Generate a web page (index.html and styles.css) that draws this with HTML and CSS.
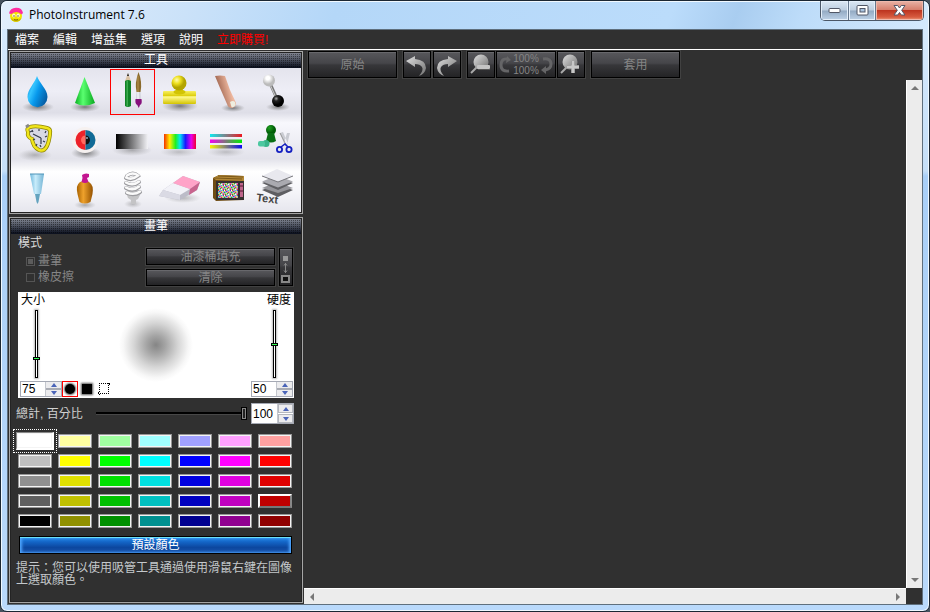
FILE: index.html
```html
<!DOCTYPE html>
<html lang="zh-Hant">
<head>
<meta charset="utf-8">
<title>PhotoInstrument 7.6</title>
<link rel="stylesheet" href="styles.css">
</head>
<body>
<div class="window">
  <header class="titlebar">
    <svg class="logo" viewBox="0 0 16 16" width="16" height="16" aria-hidden="true">
      <circle cx="8" cy="9" r="6" fill="#f2e600"/>
      <path d="M2.500 11a6 6 0 0 0 11 0q-5 4-11 0z" fill="#c9b800"/>
      <path d="M1 6.500Q2 1 8 .8T15 6l-1.500 1.500Q11 4.500 8 5T3.500 7z" fill="#ff2ca0"/>
      <ellipse cx="5.800" cy="8.500" rx="1.700" ry="2" fill="#fffbd0"/><ellipse cx="10.200" cy="8.500" rx="1.700" ry="2" fill="#fffbd0"/>
      <circle cx="6" cy="9" r=".8" fill="#665"/><circle cx="10" cy="9" r=".8" fill="#665"/>
      <path d="M6 12.500q2 1 4 0" stroke="#8a7400" fill="none"/>
    </svg>
    <h1>PhotoInstrument 7.6</h1>
    <div class="caption-buttons">
      <button type="button" class="cap" aria-label="最小化"><svg width="13" height="7" viewBox="0 0 13 7"><rect x="1" y="1.500" width="11" height="4" rx="1" fill="#fff" stroke="#515766"/></svg></button>
      <button type="button" class="cap" aria-label="最大化"><svg width="13" height="11" viewBox="0 0 13 11"><rect x="1" y=".5" width="11" height="9.500" rx="1" fill="#fff" stroke="#515766"/><rect x="4" y="3.500" width="5" height="3.500" fill="#a9c3df" stroke="#515766"/></svg></button>
      <button type="button" class="cap cap-close" aria-label="關閉"><svg width="13" height="11" viewBox="0 0 13 11"><path d="M1 .5h3.700L6.500 3 8.300.5H12L8.700 5.300 12 10H8.300L6.500 7.500 4.700 10H1l3.300-4.700z" fill="#fff" stroke="#535666"/></svg></button>
    </div>
  </header>

  <div class="client">
    <nav class="menubar">
      <button type="button">檔案</button>
      <button type="button">編輯</button>
      <button type="button">增益集</button>
      <button type="button">選項</button>
      <button type="button">說明</button>
      <button type="button" class="buy">立即購買!</button>
    </nav>

    <div class="workspace">
      <aside class="sidebar">
        <section class="panel">
          <h2 class="panel-title">工具</h2>
          <div class="tools">
            <button type="button" aria-label="模糊"><svg viewBox="0 0 45 46">
              <defs>
                <radialGradient id="shade"><stop offset="0" stop-color="#555" stop-opacity=".75"/><stop offset="1" stop-color="#777" stop-opacity="0"/></radialGradient>
                <linearGradient id="drop" x1="0" x2="1" y2=".6"><stop offset="0" stop-color="#0870c8"/><stop offset=".35" stop-color="#35c5ff"/><stop offset=".6" stop-color="#0798ec"/><stop offset="1" stop-color="#0560a8"/></linearGradient>
              </defs>
              <ellipse cx="23" cy="38" rx="16" ry="5" fill="url(#shade)"/>
              <path d="M22 7C20 14 12.500 20 12.500 28a9.800 10 0 0 0 20 0C32.500 20 24 14 22 7z" fill="url(#drop)"/></svg></button>
            <button type="button" aria-label="銳化"><svg viewBox="0 0 45 46">
              <defs><linearGradient id="cone"><stop offset="0" stop-color="#08b020"/><stop offset=".4" stop-color="#5aff70"/><stop offset="1" stop-color="#08a81e"/></linearGradient></defs>
              <ellipse cx="23" cy="38" rx="15" ry="5" fill="url(#shade)"/>
              <path d="M22.500 8L13 34q9 5 20 0z" fill="url(#cone)"/></svg></button>
            <button type="button" class="selected" aria-label="畫筆"><svg viewBox="0 0 45 46">
              <path d="M15 12l3-8 3 8z" fill="#d9c2a4"/><path d="M17 7l1-3 1 3z" fill="#222"/>
              <path d="M15 12q3-2 6 0v25q-3 2-6 0z" fill="#118226"/><path d="M16.500 11.500h1.500v26h-1.500z" fill="#3cab4e"/>
              <path d="M28.500 3q4 10 2 20h-4q-2-9 2-20z" fill="#8a6a2c"/><path d="M28 7v16" stroke="#b89550"/>
              <path d="M26.500 23h4l.5 7h-5z" fill="#d2d4dc"/><path d="M28 23v7" stroke="#fff"/>
              <path d="M25.500 30h6q1 5-1.500 6l-1.200 3-1.500-3q-2.500-1-1.800-6z" fill="#86117c"/></svg></button>
            <button type="button" aria-label="仿製圖章"><svg viewBox="0 0 45 46">
              <defs><radialGradient id="ball" cx=".35" cy=".3"><stop offset="0" stop-color="#fffcb0"/><stop offset=".5" stop-color="#eee020"/><stop offset="1" stop-color="#b3a400"/></radialGradient>
              <linearGradient id="base" x2="0" y2="1"><stop offset="0" stop-color="#f8f060"/><stop offset=".35" stop-color="#dfd010"/><stop offset=".45" stop-color="#fffa90"/><stop offset="1" stop-color="#d3c300"/></linearGradient></defs>
              <ellipse cx="23" cy="37" rx="18" ry="6" fill="url(#shade)"/>
              <path d="M19 19h7l-1 8h-5z" fill="#c8b900"/><rect x="6" y="22" width="33" height="13" rx="1" fill="url(#base)"/>
              <ellipse cx="22.500" cy="23" rx="6" ry="2.500" fill="#d2c404"/><circle cx="22" cy="14" r="7.500" fill="url(#ball)"/></svg></button>
            <button type="button" aria-label="塗抹"><svg viewBox="0 0 45 46">
              <defs><linearGradient id="skin" x2="1" y2="-.4"><stop offset="0" stop-color="#a66c56"/><stop offset=".5" stop-color="#efb9a0"/><stop offset="1" stop-color="#b07861"/></linearGradient></defs>
              <ellipse cx="29" cy="39" rx="12" ry="4" fill="url(#shade)"/>
              <path d="M11 7q5-1 10 0l5 14 6 13q0 4-4 5-4 0-5-4L16 19z" fill="url(#skin)"/><path d="M26 33q3-2 5 0l.500 3q-2 3-4 2z" fill="#eeeee0"/></svg></button>
            <button type="button" aria-label="液化"><svg viewBox="0 0 45 46">
              <defs><radialGradient id="wb" cx=".4" cy=".3"><stop offset=".3" stop-color="#fff"/><stop offset="1" stop-color="#bbb"/></radialGradient><radialGradient id="bb" cx=".35" cy=".3"><stop offset="0" stop-color="#aaa"/><stop offset=".4" stop-color="#222"/><stop offset="1"/></radialGradient></defs>
              <ellipse cx="26" cy="38" rx="12" ry="4" fill="url(#shade)"/>
              <path d="M17 12l9 20" stroke="#777" stroke-width="3"/><path d="M16.500 12l9 20" stroke="#ccc"/>
              <circle cx="17" cy="11.500" r="6" fill="url(#wb)"/><circle cx="26" cy="32" r="6" fill="url(#bb)"/></svg></button>

            <button type="button" aria-label="時間"><svg viewBox="0 0 45 46">
              <ellipse cx="20" cy="38" rx="17" ry="6" fill="url(#shade)" opacity=".5"/>
              <path d="M13 15q-2-4 2-5 6-2 17 1 4 1 3 6-1 8-3 12-3 6-8 4-6-3-7-11-5-2-4-7z" fill="#d8d9e4" stroke="#8f8500" stroke-width="4"/>
              <path d="M13 15q-2-4 2-5 6-2 17 1 4 1 3 6-1 8-3 12-3 6-8 4-6-3-7-11-5-2-4-7z" fill="none" stroke="#f0e51c" stroke-width="2.500"/>
              <path d="M26 21l-8-4m8 4v6M17 13l1 2m6-3v2m7 0l-1 2m2 3l-2 1m0 5l-2-1m-2 6l-1-2m-4 1l1-2m-4-4l2-1m-5-7l2-1" stroke="#333a4a" stroke-width="1.200"/>
              <path d="M11 10l3-2" stroke="#888" stroke-width="3"/></svg></button>
            <button type="button" aria-label="紅眼"><svg viewBox="0 0 45 46">
              <ellipse cx="24" cy="36" rx="15" ry="6" fill="url(#shade)"/>
              <circle cx="23" cy="23" r="13" fill="#f6f1f0"/><path d="M23.500 13a10 10 0 0 0 0 20z" fill="#ed2229"/><path d="M23.500 13a10 10 0 0 1 0 20z" fill="#126b96"/>
              <path d="M23.500 18.500a4.500 4.500 0 0 1 0 9z" fill="#111"/><path d="M23.500 18.500a4.500 4.500 0 0 0 0 9z" fill="#ff6a60"/><circle cx="25" cy="21" r="1" fill="#9ab"/></svg></button>
            <button type="button" aria-label="灰階漸層"><svg viewBox="0 0 45 46">
              <defs><linearGradient id="grey"><stop offset="0"/><stop offset="1" stop-color="#f2f2f6"/></linearGradient></defs>
              <ellipse cx="22" cy="33" rx="20" ry="6" fill="url(#shade)" opacity=".6"/><rect x="6" y="17" width="32" height="15" fill="url(#grey)"/></svg></button>
            <button type="button" aria-label="彩虹漸層"><svg viewBox="0 0 45 46">
              <defs><linearGradient id="rain"><stop offset="0" stop-color="#f33200"/><stop offset=".18" stop-color="#ffee00"/><stop offset=".36" stop-color="#20f020"/><stop offset=".5" stop-color="#00e5f5"/><stop offset=".67" stop-color="#1818ff"/><stop offset=".85" stop-color="#e800f0"/><stop offset="1" stop-color="#f00030"/></linearGradient></defs>
              <ellipse cx="22" cy="35" rx="19" ry="5" fill="url(#shade)" opacity=".4"/><rect x="7" y="17" width="32" height="15" fill="url(#rain)"/></svg></button>
            <button type="button" aria-label="色彩平衡"><svg viewBox="0 0 45 46">
              <defs><linearGradient id="l1"><stop offset="0" stop-color="#10e8ee"/><stop offset="1" stop-color="#ec1820"/></linearGradient><linearGradient id="l2"><stop offset="0" stop-color="#f400f0"/><stop offset="1" stop-color="#00f000"/></linearGradient><linearGradient id="l3"><stop offset="0" stop-color="#f6f600"/><stop offset="1" stop-color="#0808f0"/></linearGradient></defs>
              <ellipse cx="22" cy="35" rx="19" ry="5" fill="url(#shade)" opacity=".4"/>
              <rect x="6" y="17" width="32" height="3" fill="url(#l1)"/><rect x="6" y="22.500" width="32" height="3.500" fill="url(#l2)"/><rect x="6" y="28" width="32" height="3.500" fill="url(#l3)"/></svg></button>
            <button type="button" aria-label="複製物件"><svg viewBox="0 0 45 46">
              <defs><radialGradient id="pawn" cx=".35" cy=".3"><stop offset="0" stop-color="#20a020"/><stop offset="1" stop-color="#005c08"/></radialGradient></defs>
              <circle cx="19" cy="13" r="5" fill="url(#pawn)"/><path d="M16 16h6l2 8q-5 3-10 0z" fill="#086e14"/>
              <circle cx="14" cy="26.500" r="3.500" fill="#38b48a"/><rect x="6" y="24" width="7" height="5.500" rx="2" fill="#4cc8a0"/>
              <path d="M28 16l3-1 5 12-3 2zM38 16l-3 0-3 10 3 2z" fill="#c9cbd2"/><path d="M28 16l6 12" stroke="#999"/>
              <circle cx="27.500" cy="32.500" r="2.600" fill="none" stroke="#1420c0" stroke-width="1.800"/><circle cx="37" cy="32.500" r="2.600" fill="none" stroke="#1420c0" stroke-width="1.800"/><path d="M29 30l4-3 3 3" fill="none" stroke="#1420c0" stroke-width="1.500"/></svg></button>

            <button type="button" aria-label="修復膏"><svg viewBox="0 0 45 46">
              <defs><linearGradient id="tube"><stop offset="0" stop-color="#70b8dc"/><stop offset=".4" stop-color="#c8ecfb"/><stop offset="1" stop-color="#74b4d4"/></linearGradient></defs>
              <path d="M15 9h14l-3 20h-7z" fill="url(#tube)"/><path d="M20 29h5l-1.500 8-1 2-1-2z" fill="#64a3bf"/><path d="M15 9h14" stroke="#4f94b8"/></svg></button>
            <button type="button" aria-label="乳液"><svg viewBox="0 0 45 46">
              <defs><linearGradient id="bottle"><stop offset="0" stop-color="#a86200"/><stop offset=".4" stop-color="#efa22c"/><stop offset="1" stop-color="#955200"/></linearGradient></defs>
              <ellipse cx="23" cy="40" rx="11" ry="4" fill="url(#shade)" opacity=".6"/>
              <path d="M18 17q5-2 9 0 5 3 3.500 12l-2 8q-6 3-11 0l-2-8Q13.500 20 18 17z" fill="url(#bottle)"/>
              <path d="M20 10q3-2.500 7-1v3l-2 1 1.500 4q-3.500 2-7 0l1-4z" fill="#c41690"/></svg></button>
            <button type="button" aria-label="燈光"><svg viewBox="0 0 45 46">
              <ellipse cx="23" cy="39" rx="9" ry="4" fill="url(#shade)" opacity=".5"/>
              <path d="M18 24h9l4 4-3 6-2 1v4h-5v-4l-3-2-2-6z" fill="#c4c4c6"/>
              <g fill="none" stroke-linecap="round"><path d="M17 11q6-5 11 0-6 5-12 2m0 5q7 4 13-1m-13 6q7 4 13-1m-12 6q7 3 13-1" stroke="#9b9b9f" stroke-width="4"/><path d="M17 10.500q6-4 11 0-6 5-12 2m0 5q7 4 13-1m-13 6q7 4 13-1m-12 6q7 3 13-1" stroke="#fafafa" stroke-width="2.500"/></g></svg></button>
            <button type="button" aria-label="橡皮擦"><svg viewBox="0 0 45 46">
              <ellipse cx="26" cy="33" rx="18" ry="5" fill="url(#shade)" opacity=".5"/>
              <path d="M2 31l4-6 20-14 17 6-3 8-17 10z" fill="#bcbcc8"/><path d="M6 25l10-7 17 6-10 6z" fill="#f2f2f8"/><path d="M2 31l4-6 17 5v5z" fill="#dadae4"/>
              <path d="M16 18l10-7 17 6-10 7z" fill="#ffa3c8"/><path d="M33 24l10-7-3 8-8 5z" fill="#c8648e"/></svg></button>
            <button type="button" aria-label="雜訊"><svg viewBox="0 0 45 46">
              <defs><pattern id="noise" width="7" height="5" patternUnits="userSpaceOnUse"><rect width="7" height="5" fill="#b4b4ac"/><path d="M0 0h1v1H0zM3 2h1v1H3zM5 4h1v1H5z" fill="#f03030"/><path d="M1 1h1v1H1zM5 0h1v1H5z" fill="#3050e0"/><path d="M2 3h1v1H2zM6 2h1v1H6zM0 4h1v1H0z" fill="#18b030"/><path d="M3 0h1v1H3zM0 2h1v1H0z" fill="#40d0d0"/><path d="M5 3h1v1H5zM2 1h1v1H2z" fill="#e040d0"/><path d="M4 1h1v1H4zM1 3h1v1H1z" fill="#f4f050"/><path d="M6 0h1v1H6zM3 4h1v1H3z" fill="#fff"/></pattern></defs>
              <path d="M9 13l6-3 25 1v24l-28 1-3-3z" fill="#6f4c14"/><path d="M9 13l6-3 25 1v5l-28-1z" fill="#b28736"/><path d="M10 13l28 1M14 11l25 1" stroke="#7b5818"/>
              <rect x="12" y="16" width="28" height="19" fill="#363030"/><rect x="14" y="18" width="20" height="15" fill="url(#noise)"/><rect x="36" y="18" width="3" height="14" fill="#be668c"/><path d="M36 21h3m-3 5h3" stroke="#513"/></svg></button>
            <button type="button" aria-label="圖層與文字"><svg viewBox="0 0 45 46">
              <path d="M10 25l15-6 16 6-15 7z" fill="#5e5e62"/><path d="M10 23l15-6 16 6-15 5z" fill="#95959a"/><path d="M10 18l15-6 16 6-15 7z" fill="#606064"/><path d="M10 16.500l15-6 16 6-15 6z" fill="#aaaab0"/>
              <path d="M10 11l15-7 16 7-15 6z" fill="#e8e8ee"/><path d="M10 11l16 6 15-6" fill="none" stroke="#77777c"/>
              <text class="layer-text" x="4" y="36" transform="rotate(7 4 36)">Text</text></svg></button>
          </div>
        </section>

        <section class="panel brush">
          <h2 class="panel-title">畫筆</h2>
          <div class="brush-body">
            <div class="mode">
              <fieldset class="mode-options">
                <legend>模式</legend>
                <label><input type="radio" name="mode" checked disabled>畫筆</label>
                <label><input type="radio" name="mode" disabled>橡皮擦</label>
              </fieldset>
              <div class="mode-actions">
                <button type="button" class="btn">油漆桶填充</button>
                <button type="button" class="btn">清除</button>
              </div>
              <button type="button" class="btn swap" aria-label="切換大小"><svg width="11" height="34" viewBox="0 0 11 34"><rect x="3" y="6" width="5" height="5" fill="#999"/><path d="M5.500 13v10M4 15.500l1.500-2 1.500 2M4 20.500l1.500 2 1.500-2" fill="none" stroke="#888"/><rect x="2" y="26" width="7" height="6" fill="#111" stroke="#888" stroke-width="2"/></svg></button>
            </div>

            <div class="preview">
              <div class="preview-main">
                <div class="vertical">
                  <label for="size">大小</label>
                  <input type="range" class="vrange size-range" aria-label="大小" min="0" max="100" value="27">
                </div>
                <svg class="blob" width="74" height="74" viewBox="0 0 74 74" aria-hidden="true">
                  <defs><radialGradient id="soft"><stop offset="0" stop-color="#858585"/><stop offset=".25" stop-color="#a4a4a4"/><stop offset=".6" stop-color="#d6d6d6"/><stop offset=".88" stop-color="#f7f7f7"/><stop offset="1" stop-color="#fff"/></radialGradient></defs>
                  <circle cx="37" cy="37" r="37" fill="url(#soft)"/>
                </svg>
                <div class="vertical right">
                  <label for="hardness">硬度</label>
                  <input type="range" class="vrange hard-range" aria-label="硬度" min="0" max="100" value="50">
                </div>
              </div>
              <div class="preview-foot">
                <div class="spin"><input id="size" type="text" value="75"><span class="arrows"><button type="button" aria-label="增加大小"><svg viewBox="0 0 8 4"><path d="M1 4l3-4 3 4z"/></svg></button><button type="button" aria-label="減少大小"><svg viewBox="0 0 8 4"><path d="M1 0l3 4 3-4z"/></svg></button></span></div>
                <div class="shapes">
                  <button type="button" class="selected" aria-label="圓形"><i class="dot"></i></button>
                  <button type="button" aria-label="方形"><i class="block"></i></button>
                  <button type="button" aria-label="選取"><svg width="12" height="12" viewBox="0 0 12 12" shape-rendering="crispEdges"><path d="M1 1h9M1 10h9" stroke="#000" stroke-width="2" stroke-dasharray="1 1" clip-path="inset(0)" opacity="0"/><path d="M1 .5h9M2 10.500h9" stroke="#000" stroke-dasharray="1 1"/><path d="M1.500 2v8M10.500 2v8" stroke="#000" stroke-dasharray="1 1"/><path d="M10 0h2v1h-2zM11 1h1v1h-1zM0 9h1v2H0zM1 11h1v1H1z"/></svg></button>
                </div>
                <div class="spin"><input id="hardness" type="text" value="50"><span class="arrows"><button type="button" aria-label="增加硬度"><svg viewBox="0 0 8 4"><path d="M1 4l3-4 3 4z"/></svg></button><button type="button" aria-label="減少硬度"><svg viewBox="0 0 8 4"><path d="M1 0l3 4 3-4z"/></svg></button></span></div>
              </div>
            </div>

            <div class="total">
              <label for="total">總計, 百分比</label>
              <input type="range" class="hrange" aria-label="總計, 百分比" min="0" max="100" value="100">
              <div class="spin tall"><input id="total" type="text" value="100"><span class="arrows"><button type="button" aria-label="增加百分比"><svg viewBox="0 0 8 4"><path d="M1 4l3-4 3 4z"/></svg></button><button type="button" aria-label="減少百分比"><svg viewBox="0 0 8 4"><path d="M1 0l3 4 3-4z"/></svg></button></span></div>
            </div>

            <div class="swatches">
              <button type="button" class="current" aria-label="#ffffff" style="background-color:#ffffff"></button><button type="button" aria-label="#ffffa0" style="background-color:#ffffa0"></button><button type="button" aria-label="#a0ffa0" style="background-color:#a0ffa0"></button><button type="button" aria-label="#a0ffff" style="background-color:#a0ffff"></button><button type="button" aria-label="#a0a0ff" style="background-color:#a0a0ff"></button><button type="button" aria-label="#ffa0ff" style="background-color:#ffa0ff"></button><button type="button" aria-label="#ffa0a0" style="background-color:#ffa0a0"></button>
              <button type="button" aria-label="#c0c0c0" style="background-color:#c0c0c0"></button><button type="button" aria-label="#ffff00" style="background-color:#ffff00"></button><button type="button" aria-label="#00ff00" style="background-color:#00ff00"></button><button type="button" aria-label="#00ffff" style="background-color:#00ffff"></button><button type="button" aria-label="#0000ff" style="background-color:#0000ff"></button><button type="button" aria-label="#ff00ff" style="background-color:#ff00ff"></button><button type="button" aria-label="#ff0000" style="background-color:#ff0000"></button>
              <button type="button" aria-label="#909090" style="background-color:#909090"></button><button type="button" aria-label="#e0e000" style="background-color:#e0e000"></button><button type="button" aria-label="#00e000" style="background-color:#00e000"></button><button type="button" aria-label="#00e0e0" style="background-color:#00e0e0"></button><button type="button" aria-label="#0000e0" style="background-color:#0000e0"></button><button type="button" aria-label="#e000e0" style="background-color:#e000e0"></button><button type="button" aria-label="#e00000" style="background-color:#e00000"></button>
              <button type="button" aria-label="#606060" style="background-color:#606060"></button><button type="button" aria-label="#c0c000" style="background-color:#c0c000"></button><button type="button" aria-label="#00c000" style="background-color:#00c000"></button><button type="button" aria-label="#00c0c0" style="background-color:#00c0c0"></button><button type="button" aria-label="#0000c0" style="background-color:#0000c0"></button><button type="button" aria-label="#c000c0" style="background-color:#c000c0"></button><button type="button" class="raised" aria-label="#c00000" style="background-color:#c00000"></button>
              <button type="button" aria-label="#000000" style="background-color:#000000"></button><button type="button" aria-label="#909000" style="background-color:#909000"></button><button type="button" aria-label="#009000" style="background-color:#009000"></button><button type="button" aria-label="#009090" style="background-color:#009090"></button><button type="button" aria-label="#000090" style="background-color:#000090"></button><button type="button" aria-label="#900090" style="background-color:#900090"></button><button type="button" aria-label="#900000" style="background-color:#900000"></button>
            </div>

            <button type="button" class="default-colors">預設顏色</button>
            <p class="tip">提示：您可以使用吸管工具通過使用滑鼠右鍵在圖像上選取顏色。</p>
          </div>
        </section>
      </aside>

      <main class="stage">
        <div class="toolbar">
          <button type="button" class="btn wide">原始</button>
          <div class="group">
            <button type="button" class="btn icon" aria-label="復原"><svg width="24" height="24" viewBox="0 0 24 24"><defs><linearGradient id="metal" x2="1" y2="1"><stop offset="0" stop-color="#e0e0e0"/><stop offset="1" stop-color="#707070"/></linearGradient></defs><path d="M1 8l9-5v3q11 1 11 9-1 6-7 8 5-6 3-9-2-3-7-3v3z" fill="url(#metal)"/></svg></button>
            <button type="button" class="btn icon" aria-label="重做"><svg width="24" height="24" viewBox="0 0 24 24"><path d="M22 8l-9-5v3Q2 7 2 15q1 6 7 8-5-6-3-9 2-3 7-3v3z" fill="url(#metal)"/></svg></button>
          </div>
          <div class="group zoom">
            <button type="button" class="btn icon" aria-label="縮小"><svg width="24" height="24" viewBox="0 0 24 24"><path d="M8 14l-6 6" stroke="#aaa" stroke-width="2"/><circle cx="12" cy="9" r="7.500" fill="url(#metal)"/><rect x="8" y="12" width="13" height="4" rx="1" fill="#c4c4c4"/><path d="M9 16.500h12" stroke="#555"/></svg></button>
            <button type="button" class="btn fit"><svg width="14" height="18" viewBox="0 0 14 18"><path d="M10 3Q3 2 3 9t8 6" fill="none" stroke="#656567" stroke-width="3"/><path d="M9 0l4 4-5 3z" fill="#656567"/></svg><span class="ratios"><span>100%</span><span>100%</span></span><svg width="14" height="18" viewBox="0 0 14 18"><path d="M3 3q8-1 8 5 0 5-6 6" fill="none" stroke="#656567" stroke-width="3"/><path d="M6 10l-5 4 5 4z" fill="#656567"/></svg></button>
            <button type="button" class="btn icon" aria-label="放大"><svg width="24" height="24" viewBox="0 0 24 24"><path d="M8 14l-6 6" stroke="#aaa" stroke-width="2"/><circle cx="11" cy="9" r="7.500" fill="url(#metal)"/><path d="M14 8v12M8 14h12" stroke="#777" stroke-width="4"/><path d="M14 8v12M8 14h12" stroke="#c8c8c8" stroke-width="3"/></svg></button>
          </div>
          <button type="button" class="btn wide">套用</button>
        </div>
        <div class="viewport">
          <div class="canvas"></div>
          <div class="scroll vertical-scroll">
            <button type="button" aria-label="向上"><svg width="8" height="4" viewBox="0 0 8 4"><path d="M0 4l4-4 4 4z"/></svg></button>
            <button type="button" aria-label="向下"><svg width="8" height="4" viewBox="0 0 8 4"><path d="M0 0l4 4 4-4z"/></svg></button>
          </div>
          <div class="scroll horizontal-scroll">
            <button type="button" aria-label="向左"><svg width="4" height="8" viewBox="0 0 4 8"><path d="M4 0L0 4l4 4z"/></svg></button>
            <button type="button" aria-label="向右"><svg width="4" height="8" viewBox="0 0 4 8"><path d="M0 0l4 4-4 4z"/></svg></button>
          </div>
        </div>
      </main>
    </div>
  </div>
</div>
</body>
</html>
```
FILE: styles.css
```css
* { box-sizing: border-box; }

body {
  margin: 0;
  background: #46525e;
  font: 12px/12px "Liberation Sans", "Noto Sans CJK TC", sans-serif;
  color: #fff;
}

button, input {
  margin: 0;
  padding: 0;
  border: 0;
  background: none;
  font: inherit;
  color: inherit;
}

button svg { display: block; }

.window {
  display: flex;
  flex-direction: column;
  min-height: 100vh;
  padding: 0 6px 6px;
  border: 1px solid #1b2733;
  border-radius: 7px;
  background: linear-gradient(#d9ebfd 0, #c5dff8 170px, #a9cff7 175px, #b9d9fb 100%);
  box-shadow: inset 0 0 0 1px #eff8ff;
}

.titlebar {
  display: flex;
  align-items: center;
  gap: 5px;
  height: 28px;
  margin: 0 -5px;
  padding-left: 6px;
  border-radius: 6px 6px 0 0;
  background: linear-gradient(110deg, #e2effc 0, #cbe2f9 20%, #b4d7f8 36%, #bbdcfb 72%, #a9cdf0 79%, #bddcf9 86%, #d4e9fd 100%);
  box-shadow: inset 0 1px #f1f9ff;
}

.titlebar h1 {
  flex: 1;
  margin: 0;
  font: 12px/16px "Open Sans", "Noto Sans", sans-serif;
  color: #000;
}

.caption-buttons {
  display: flex;
  align-self: flex-start;
  margin-right: 4px;
  border: 1px solid #4b5767;
  border-top: 0;
  border-radius: 0 0 5px 5px;
  overflow: hidden;
}

.cap {
  display: flex;
  align-items: center;
  justify-content: center;
  width: 27px;
  height: 19px;
  border-right: 1px solid #65778c;
  background: linear-gradient(#dce8f4 0, #bccddf 48%, #93aac3 52%, #bed2e7 100%);
  box-shadow: inset 0 0 0 1px #e4effa;
}
.cap:first-child { width: 28px; }
.cap-close {
  width: 47px;
  border-right: 0;
  background: linear-gradient(#e9b3a6 0, #d7806e 45%, #bd3520 50%, #d75c40 85%, #ed9c7e 100%);
  box-shadow: inset 0 0 0 1px #efb9ac;
}

.client {
  display: flex;
  flex: 1;
  flex-direction: column;
  border: 1px solid #5f6f7d;
  background: #303030;
}

.menubar {
  display: flex;
  gap: 14px;
  height: 20px;
  padding-left: 7px;
  border-bottom: 1px solid #fff;
}
.menubar .buy { color: #f00; }

.workspace {
  display: flex;
  flex: 1;
}

.sidebar {
  display: flex;
  flex-direction: column;
  gap: 3px;
  flex: 0 0 296px;
  padding: 1px;
}

.panel {
  border: 1px solid #a5a5a5;
  outline: 1px solid #242424;
  outline-offset: -2px;
}
.brush { flex: 1; }

.panel-title {
  height: 16px;
  margin: 0;
  background:
    conic-gradient(rgba(0, 0, 0, .45) 25%, transparent 0) 0 0 / 2px 2px,
    linear-gradient(#888c98, #4b505e 50%, #0d1220 95%);
  font-size: 12px;
  font-weight: 400;
  line-height: 16px;
  text-align: center;
}

.tools {
  display: grid;
  grid-template-columns: repeat(6, 1fr);
  grid-auto-rows: 46px;
  gap: 2px;
  margin: 0 1px 1px;
  padding: 1px 4px;
  background: linear-gradient(#e4e4ed 0, #eeeef6 16%, #dedee7 31%, #f8f8fd 38%, #ededf4 52%, #e2e2ea 63%, #fff 72%, #f6f6fa 85%, #e6e6ed 100%);
}
.tools button { border: 1px solid transparent; }
.tools .selected { border-color: #f00; }
.tools svg { width: 45px; height: 46px; margin: -1px; }
.layer-text {
  font: bold 11px "Liberation Sans", sans-serif;
  fill: #444;
}

.btn {
  border: 1px solid #000;
  outline: 1px solid #414141;
  background: linear-gradient(#58585c 0, #454549 45%, #37373a 52%, #232325 100%);
  box-shadow: inset 0 1px #68686c;
  color: #858585;
}

.brush-body { padding: 2px 8px 8px; }

.mode {
  display: flex;
  gap: 4px;
  padding-right: 1px;
}
.mode-options {
  display: flex;
  flex: 1;
  flex-direction: column;
  gap: 4px;
  min-width: 0;
  margin: 0;
  padding: 0 0 0 8px;
  border: 0;
  color: #858585;
}
.mode-options legend {
  margin-left: -8px;
  padding: 1px 0 6px;
  color: #d8d8d8;
}
.mode-options label {
  display: flex;
  align-items: center;
  gap: 3px;
}
.mode-options input {
  appearance: none;
  width: 9px;
  height: 9px;
  border: 1px solid #555;
}
.mode-options input:checked {
  background: #5c5c5c;
  box-shadow: inset 0 0 0 1px #303030;
}
.mode-actions {
  display: flex;
  flex: 0 0 129px;
  flex-direction: column;
  gap: 4px;
  padding-top: 12px;
}
.mode-actions .btn { height: 17px; line-height: 14px; }
.swap {
  width: 14px;
  height: 38px;
  margin-top: 12px;
}

.preview {
  height: 106px;
  margin-top: 6px;
  padding: 2px 1px 0 2px;
  background: #fff;
  color: #000;
}
.preview-main {
  display: flex;
  justify-content: space-between;
  height: 87px;
  padding: 0 2px 0 1px;
}
.vertical { width: 24px; }
.vertical label { display: block; }
.vrange {
  display: block;
  appearance: none;
  writing-mode: vertical-lr;
  direction: rtl;
  width: 7px;
  height: 68px;
  margin: 4px 0 0 12px;
}
.hard-range { margin-left: 4px; }
.vrange::-webkit-slider-runnable-track {
  width: 3px;
  border: 1px solid #000;
  background: #fff;
  box-shadow: 0 0 2px 1px #bbb;
}
.vrange::-webkit-slider-thumb {
  appearance: none;
  width: 7px;
  height: 3px;
  margin-left: -3px;
  border: 1px solid #000;
  background: #3f5;
}
.blob { margin-top: 14px; }
.preview-foot {
  display: flex;
  align-items: center;
}

.spin {
  display: flex;
  width: 42px;
  height: 16px;
  border: 1px solid #a5a9b4;
  background: #fff;
  color: #000;
}
.spin input {
  flex: 1;
  min-width: 0;
  padding-left: 1px;
}
.arrows {
  display: flex;
  flex-direction: column;
  width: 16px;
  border-left: 1px solid #c4c7ce;
  background: #ececee;
}
.arrows button {
  display: flex;
  flex: 1;
  align-items: center;
  justify-content: center;
  min-height: 0;
}
.arrows button:first-child { border-bottom: 1px solid #a9acb4; }
.arrows button:last-child { border-top: 1px solid #a9acb4; }
.arrows svg { width: 8px; height: 4px; fill: #4a64b8; }
.tall {
  width: 43px;
  height: 21px;
}
.tall .arrows {
  gap: 1px;
  background: #fff;
}
.tall .arrows button {
  border: 1px solid #b4b7be;
  background: #ececee;
}

.shapes {
  display: flex;
  flex: 1;
  gap: 1px;
}
.shapes button {
  display: flex;
  align-items: center;
  justify-content: center;
  width: 16px;
  height: 16px;
  border: 1px solid transparent;
}
.shapes .selected { border-color: #f00; }
.dot, .block {
  width: 10px;
  height: 10px;
  background: #000;
  box-shadow: 0 0 2px 1px #555;
}
.dot { border-radius: 50%; }

.total {
  display: flex;
  align-items: center;
  margin-top: 5px;
  margin-left: -2px;
  color: #d0d0d0;
}
.total label { flex: 0 0 80px; }
.hrange {
  appearance: none;
  flex: 1;
  min-width: 0;
  height: 11px;
  margin-right: 5px;
}
.hrange::-webkit-slider-runnable-track {
  height: 3px;
  border-bottom: 1px solid #484848;
  background: #000;
}
.hrange::-webkit-slider-thumb {
  appearance: none;
  width: 4px;
  height: 11px;
  margin-top: -4px;
  border: 1px solid #888;
  outline: 1px solid #000;
  background: #222;
}

.swatches {
  display: grid;
  grid-template-columns: repeat(7, 34px);
  grid-auto-rows: 14px;
  gap: 6px;
  margin-top: 10px;
}
.swatches button {
  border: 1px solid #969696;
  box-shadow: inset 0 0 0 1px #f4f4f4;
}
.swatches .current {
  margin: -2px;
  border: 2px solid #fff;
  border-top: 1px solid #888;
  border-left: 1px solid #888;
  outline: 1px dotted #fff;
  outline-offset: 2px;
}
.swatches .raised {
  border-width: 2px;
  border-color: #fff #888 #777 #fff;
  box-shadow: none;
}

.default-colors {
  display: block;
  width: calc(100% - 3px);
  height: 18px;
  margin: 8px 0 0 1px;
  border: 1px solid #000;
  background: linear-gradient(#2a90ee 0, #1466c8 30%, #0c479f 65%, #1b54ab 100%);
  box-shadow: inset 0 1px #6ae0f8, inset 2px 0 3px #4fa6ff, inset -2px 0 3px #4fa6ff;
}

.tip {
  margin: 8px -2px 0;
  color: #c4c8cb;
}

.stage {
  display: flex;
  flex: 1;
  flex-direction: column;
  min-width: 0;
}
.toolbar {
  display: flex;
  gap: 6px;
  padding: 1px 4px;
}
.group { display: flex; gap: 2px; }
.zoom { gap: 1px; }
.toolbar .btn { height: 27px; }
.wide { width: 89px; }
.icon {
  display: flex;
  align-items: center;
  justify-content: center;
  width: 28px;
}
.fit {
  display: flex;
  align-items: center;
  justify-content: space-between;
  width: 60px;
  padding: 0 1px;
}
.ratios {
  display: flex;
  flex-direction: column;
  font-size: 10px;
}

.viewport {
  display: grid;
  flex: 1;
  grid-template-columns: 1fr 16px;
  grid-template-rows: 1fr 16px;
  margin-top: 1px;
}
.scroll {
  display: flex;
  justify-content: space-between;
  background: #ececec;
}
.vertical-scroll {
  flex-direction: column;
  border-left: 1px solid #fff;
}
.horizontal-scroll { border-top: 1px solid #fff; }
.scroll button {
  display: flex;
  align-items: center;
  justify-content: center;
  width: 16px;
  height: 16px;
}
.scroll svg { fill: #777; }
```
